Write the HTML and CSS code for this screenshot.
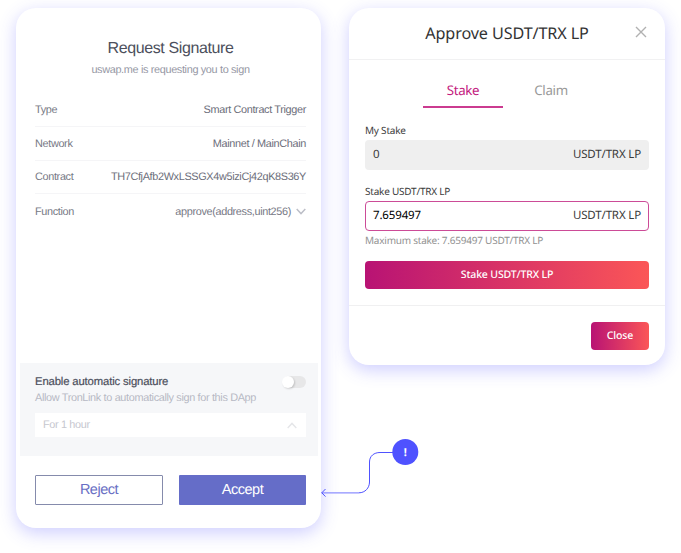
FILE: index.html
```
<!DOCTYPE html>
<html lang="en">
<head>
<meta charset="utf-8">
<title>Stake approval</title>
<link rel="stylesheet" href="styles.css">
</head>
<body>
<main class="stage">
  <section class="card signature">
    <header class="sig-head">
      <h1 class="sig-title"><span>Request Signature</span></h1>
      <p class="sig-sub"><span>uswap.me is requesting you to sign</span></p>
    </header>
    <dl class="details">
      <div class="row"><dt>Type</dt><dd class="type">Smart Contract Trigger</dd></div>
      <div class="row"><dt>Network</dt><dd class="network">Mainnet / MainChain</dd></div>
      <div class="row"><dt>Contract</dt><dd class="address">TH7CfjAfb2WxLSSGX4w5iziCj42qK8S36Y</dd></div>
      <div class="row"><dt>Function</dt><dd class="fn"><span>approve(address,uint256)</span><svg class="chev" width="10" height="7" viewBox="0 0 10 7"><path d="M.7 1 5 5.6 9.3 1"/></svg></dd></div>
    </dl>
    <div class="auto">
      <div class="auto-head"><strong class="auto-title">Enable automatic signature</strong><span class="toggle"></span></div>
      <p class="auto-sub">Allow TronLink to automatically sign for this DApp</p>
      <div class="select"><span>For 1 hour</span><svg width="10" height="7" viewBox="0 0 10 7"><path d="M.7 6 5 1.4 9.3 6"/></svg></div>
    </div>
    <div class="actions">
      <button class="btn reject">Reject</button>
      <button class="btn accept">Accept</button>
    </div>
  </section>

  <section class="card approve">
    <header class="ap-head">
      <h2 class="ap-title">Approve USDT/TRX LP</h2>
      <svg class="close-x" width="12" height="12" viewBox="0 0 12 12"><path d="M1 1 11 11M11 1 1 11"/></svg>
    </header>
    <div class="ap-body">
      <nav class="tabs"><span class="tab active">Stake</span><span class="tab">Claim</span></nav>
      <label class="label">My Stake</label>
      <div class="field muted"><span>0</span><span class="unit">USDT/TRX LP</span></div>
      <label class="label second">Stake USDT/TRX LP</label>
      <div class="field focus"><span class="value">7.659497</span><span class="unit">USDT/TRX LP</span></div>
      <p class="hint">Maximum stake: 7.659497 USDT/TRX LP</p>
      <button class="grad stake-btn">Stake USDT/TRX LP</button>
    </div>
    <footer class="ap-foot"><button class="grad close-btn">Close</button></footer>
  </section>

  <svg class="callout" width="100" height="62" viewBox="0 0 100 62">
    <path class="line light" d="M1.5 54.8H39"/>
    <path class="line" d="M39 54.8C45 54.8 49.5 50 49.5 44V24C49.5 18 54 14.500 60 14.500H74"/>
    <path class="line" d="M5.500 51 1.800 54.8 5.500 58.600"/>
    <circle cx="85.300" cy="14" r="13"/>
    <text x="85.300" y="18">!</text>
  </svg>
</main>
</body>
</html>
```
FILE: styles.css
```
* { box-sizing: border-box; margin: 0; padding: 0; }
body { background: #fff; width: 681px; height: 553px; overflow: hidden; text-rendering: geometricPrecision; }
button { border: 0; font: inherit; letter-spacing: inherit; text-rendering: inherit; }
.stage {
  position: relative;
  display: flex;
  align-items: flex-start;
  gap: 28px;
  height: 553px;
  padding: 8px 16px;
}
.card {
  flex: none;
  display: flex;
  flex-direction: column;
  background: #fff;
  border-radius: 20px;
  box-shadow: 0 5px 17px rgba(79, 79, 255, .28);
  white-space: nowrap;
}

.signature {
  width: 305px;
  height: 520px;
  font: 10.900px/16px "Liberation Sans", Arial, sans-serif;
  letter-spacing: -.35px;
  color: #777985;
}
.sig-head { padding-top: 29px; height: 85px; text-align: center; padding-left: 4px; }
.sig-title { font-size: 16px; line-height: 23px; font-weight: 400; color: #4c4f5c; letter-spacing: -.38px; }
.sig-sub { margin-top: 2px; color: #9698a5; }
.details { padding: 0 15px 0 19px; }
.row {
  display: flex;
  justify-content: space-between;
  align-items: center;
  height: 33.800px;
  padding-top: 1px;
  border-bottom: 1px solid #f5f5f7;
}
.row:last-child { border-bottom: 0; }
.type, .network, .address { color: #6c6e7a; }
.fn { display: flex; align-items: center; gap: 5px; }
svg path { fill: none; stroke: #bcbec7; stroke-width: 1.400; }
.auto {
  margin: auto 3px 0 4px;
  height: 93px;
  padding: 10px 12px 0 15px;
  background: #f6f7f9;
}
.auto-head { display: flex; justify-content: space-between; align-items: center; height: 17px; }
.auto-title { font-weight: 400; font-size: 11.300px; letter-spacing: -.14px; color: #4c4f5c; -webkit-text-stroke: .2px #4c4f5c; }
.toggle { position: relative; width: 23px; height: 12px; border-radius: 6px; background: #e7e7e8; }
.toggle::before {
  content: "";
  position: absolute;
  left: -1px;
  top: 0;
  width: 12px;
  height: 12px;
  border-radius: 50%;
  background: #fff;
  box-shadow: 1px 1px 2px rgba(0, 0, 0, .16);
}
.auto-sub { padding-top: 1px; line-height: 15px; color: #b7b9c4; }
.select {
  display: flex;
  justify-content: space-between;
  align-items: center;
  height: 24px;
  margin-top: 7px;
  padding: 0 9px 0 8px;
  background: #fff;
  color: #c6c7cf;
}
.select path { stroke: #e5e6e9; }
.actions {
  display: flex;
  justify-content: space-between;
  padding: 19px 15px 23px 19px;
}
.btn { height: 30px; font-size: 14.500px; letter-spacing: -.48px; border-radius: 1px; }
.reject { width: 128px; background: #fff; border: 1px solid #858bac; color: #696fc4; }
.accept { width: 127px; background: #656dc8; color: #fff; }

.approve {
  width: 316px;
  height: 357px;
  font: 11.500px/16px "Noto Sans", sans-serif;
  letter-spacing: -.15px;
  color: #3c3c3c;
}
.ap-head {
  position: relative;
  height: 51.500px;
  border-bottom: 1px solid #f1f1f2;
  text-align: center;
}
.ap-title { font-size: 16.200px; letter-spacing: -.12px; line-height: 50px; font-weight: 400; color: #333; }
.close-x { position: absolute; right: 18px; top: 18px; }
.close-x path { stroke: #b1b1b1; }
.ap-body { padding: 12px 16px 0; }
.tabs { display: flex; justify-content: center; gap: 8px; }
.tab {
  width: 80px;
  height: 36px;
  line-height: 37px;
  font-size: 13.300px;
  letter-spacing: -.3px;
  text-align: center;
  color: #999;
}
.tab.active { color: #c31a7e; border-bottom: 2px solid #cb3b90; }
.label { display: block; margin-top: 14px; padding-top: 1px; font-size: 10px; line-height: 15px; letter-spacing: -.22px; }
.label.second { margin-top: 13px; }
.field {
  display: flex;
  justify-content: space-between;
  align-items: center;
  height: 30px;
  margin-top: 2px;
  padding: 1px 8px 0;
  border-radius: 4px;
}
.muted { background: #efefef; }
.focus { border: 1px solid #cc4b97; padding: 1px 7px 0; }
.value { color: #000; }
.hint { font-size: 10px; line-height: 18px; letter-spacing: -.23px; color: #929292; }
.grad {
  display: block;
  height: 28px;
  border-radius: 4px;
  background: linear-gradient(90deg, #b81374, #fb5657);
  color: #fff;
  font-size: 10.500px;
  font-weight: 500;
}
.stake-btn { width: 284px; margin-top: 12.500px; }
.ap-foot {
  margin-top: auto;
  height: 60px;
  padding: 16px 16px 0;
  border-top: 1px solid #f0f0f1;
}
.close-btn { width: 58px; margin-left: auto; }

.callout { position: absolute; left: 320px; top: 438px; }
.callout .line { stroke: #4f52ff; stroke-width: 1; }
.callout .light { stroke: #8d8fff; stroke-width: 1.300; }
.callout circle { fill: #4f52ff; }
.callout text { fill: #fff; font: 700 11px "Noto Sans", sans-serif; text-anchor: middle; }
```
